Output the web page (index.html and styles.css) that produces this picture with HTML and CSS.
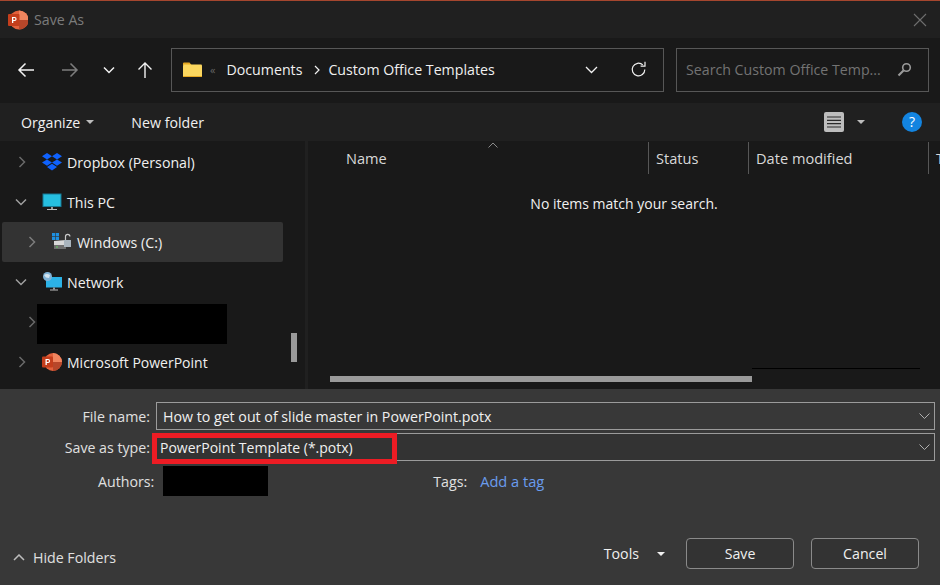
FILE: index.html
```html
<!DOCTYPE html>
<html lang="en">
<head>
  <meta charset="UTF-8">
  <title>Save As</title>
  <link rel="stylesheet" href="styles.css">
</head>
<body>
  <div class="dialog">
    <div class="titlebar">
      <svg class="app-icon" width="20" height="20" viewBox="0 0 20 20">
        <circle cx="11" cy="10" r="9.5" fill="#e2613c"/>
        <path d="M11 10h9.500a9.500 9.500 0 0 1-9.500 9.500z" fill="#b7472a"/>
        <path d="M11 .5a9.500 9.500 0 0 1 9.500 9.500H11z" fill="#f0855f"/>
        <rect x="0" y="4" width="11.500" height="12" rx="1" fill="#c43e1c"/>
        <path d="M4 13V7h2.600a2 2 0 0 1 0 4H5.300v2z M5.300 8.100V10h1.200a.95.95 0 0 0 0-1.900z" fill="#fff" fill-rule="evenodd"/>
      </svg>
      <span class="title">Save As</span>
      <svg class="close" width="14" height="14" viewBox="0 0 14 14"><path d="M1 1l12 12M13 1L1 13" stroke="#6e6e6e" stroke-width="1.100" fill="none"/></svg>
    </div>

    <div class="navbar">
      <div class="nav-buttons">
        <svg class="nav-back" width="18" height="16" viewBox="0 0 18 16"><path d="M17 8H2M8.500 1.500L2 8l6.500 6.500" stroke="#f2f2f2" stroke-width="1.500" fill="none"/></svg>
        <svg class="nav-forward" width="18" height="16" viewBox="0 0 18 16"><path d="M1 8h15M9.500 1.500L16 8l-6.500 6.500" stroke="#7d7d7d" stroke-width="1.500" fill="none"/></svg>
        <svg class="nav-recent" width="12" height="8" viewBox="0 0 12 8"><path d="M1 1.500l5 5 5-5" stroke="#f2f2f2" stroke-width="1.500" fill="none"/></svg>
        <svg class="nav-up" width="16" height="18" viewBox="0 0 16 18"><path d="M8 17V2M1.500 8.500L8 2l6.500 6.500" stroke="#f2f2f2" stroke-width="1.400" fill="none"/></svg>
      </div>
      <div class="address">
        <svg class="folder" width="19" height="15" viewBox="0 0 19 15">
          <path d="M0 1.500A1 1 0 0 1 1 .5h5.500l2 2.500H0z" fill="#e5a823"/>
          <rect x="0" y="2.500" width="19" height="12.500" rx="1" fill="#fbd75f"/>
          <rect x="0" y="14" width="19" height="1" fill="#e5a823"/>
        </svg>
        <span class="crumb-more">«</span>
        <span class="crumb">Documents</span>
        <svg class="crumb-sep" width="6" height="10" viewBox="0 0 6 10"><path d="M1 1l4 4-4 4" stroke="#f2f2f2" stroke-width="1.200" fill="none"/></svg>
        <span class="crumb">Custom Office Templates</span>
        <svg class="address-drop" width="13" height="8" viewBox="0 0 13 8"><path d="M1 1l5.500 5.500L12 1" stroke="#f2f2f2" stroke-width="1.300" fill="none"/></svg>
        <svg class="refresh" width="17" height="17" viewBox="0 0 17 17"><path d="M14.800 8.500a6.300 6.300 0 1 1-2-4.600" stroke="#f2f2f2" stroke-width="1.200" fill="none"/><path d="M15 .8v4.400h-4.400" stroke="#f2f2f2" stroke-width="1.200" fill="none"/></svg>
      </div>
      <div class="search">
        <span class="search-text">Search Custom Office Temp...</span>
        <svg width="15" height="15" viewBox="0 0 15 15"><circle cx="9.500" cy="5.500" r="3.800" stroke="#9a9a9a" stroke-width="1.600" fill="none"/><path d="M6.500 8.500L1.500 13.500" stroke="#9a9a9a" stroke-width="2.200"/></svg>
      </div>
    </div>

    <div class="toolbar">
      <span class="tool">Organize</span>
      <span class="caret organize-caret"></span>
      <span class="tool new-folder">New folder</span>
      <svg class="view-icon" width="20" height="20" viewBox="0 0 20 20"><rect width="20" height="20" rx="2" fill="#bdbdbd"/><path d="M3 5h14M3 8.300h14M3 11.600h14M3 15h14" stroke="#2a2a2a" stroke-width="1.200"/></svg>
      <span class="caret view-caret"></span>
      <svg class="help" width="20" height="20" viewBox="0 0 20 20"><circle cx="10" cy="10" r="10" fill="#1384e0"/><text x="10" y="15" text-anchor="middle" class="help-mark">?</text></svg>
    </div>

    <div class="browser">
      <div class="sidebar">
        <div class="tree-row">
          <svg class="chev" width="8" height="12" viewBox="0 0 8 12"><path d="M1.500 1l5 5-5 5" stroke="#6a6a6a" stroke-width="1.500" fill="none"/></svg>
          <svg class="tree-icon" width="20" height="18" viewBox="0 0 20 18"><path d="M5 0L0 3.200l5 3.200 5-3.200zM15 0l-5 3.200 5 3.200 5-3.200zM0 9.600l5 3.200 5-3.200-5-3.200zM20 9.600l-5-3.200-5 3.200 5 3.200zM5 14l5 3.400 5-3.400-5-3.200z" fill="#0f62fe"/></svg>
          <span>Dropbox (Personal)</span>
        </div>
        <div class="tree-row">
          <svg class="chev-open" width="12" height="8" viewBox="0 0 12 8"><path d="M1 1.500l5 5 5-5" stroke="#a0a0a0" stroke-width="1.500" fill="none"/></svg>
          <svg class="tree-icon" width="20" height="18" viewBox="0 0 20 18"><rect x="1" y="1" width="18" height="12.500" fill="#26bfe0" stroke="#167a96"/><rect x="9" y="14" width="2" height="2" fill="#9a9a9a"/><rect x="5" y="16" width="10" height="1" fill="#bcbcbc"/></svg>
          <span>This PC</span>
        </div>
        <div class="tree-row tree-row-indent tree-row-selected">
          <svg class="chev" width="8" height="12" viewBox="0 0 8 12"><path d="M1.500 1l5 5-5 5" stroke="#7d7d7d" stroke-width="1.500" fill="none"/></svg>
          <svg class="tree-icon" width="20" height="18" viewBox="0 0 20 18"><rect x="0" y="0" width="3.200" height="3.200" fill="#1e8fe0"/><rect x="3.800" y="0" width="3.200" height="3.200" fill="#1e8fe0"/><rect x="0" y="3.800" width="3.200" height="3.200" fill="#1e8fe0"/><rect x="3.800" y="3.800" width="3.200" height="3.200" fill="#1e8fe0"/><path d="M2 8l12-1v9H2z" fill="#d8d8d8"/><rect x="2" y="12" width="12" height="4" fill="#6f6f6f"/><rect x="4" y="13.500" width="2" height="1" fill="#5fd35f"/><rect x="12" y="7" width="7" height="7" fill="#a9b4bd"/><path d="M13.500 7V3.500a2.200 2.200 0 0 1 4.400 0" stroke="#c9c9c9" stroke-width="1.200" fill="none"/></svg>
          <span>Windows (C:)</span>
        </div>
        <div class="tree-row">
          <svg class="chev-open" width="12" height="8" viewBox="0 0 12 8"><path d="M1 1.500l5 5 5-5" stroke="#a0a0a0" stroke-width="1.500" fill="none"/></svg>
          <svg class="tree-icon" width="20" height="20" viewBox="0 0 20 20"><rect x="4" y="5" width="16" height="10.500" fill="#2cb2e6"/><rect x="11" y="15.500" width="2" height="2" fill="#9a9a9a"/><rect x="8" y="17.500" width="8" height="1" fill="#bcbcbc"/><circle cx="5.500" cy="4.500" r="4.500" fill="#7fb2d6"/><path d="M2 3a5 5 0 0 1 6 0l-1 3-3-.5z" fill="#d3e4ef"/></svg>
          <span>Network</span>
        </div>
        <div class="tree-row tree-row-indent">
          <svg class="chev" width="8" height="12" viewBox="0 0 8 12"><path d="M1.500 1l5 5-5 5" stroke="#6a6a6a" stroke-width="1.500" fill="none"/></svg>
          <div class="redacted tree-redacted"></div>
        </div>
        <div class="tree-row">
          <svg class="chev" width="8" height="12" viewBox="0 0 8 12"><path d="M1.500 1l5 5-5 5" stroke="#6a6a6a" stroke-width="1.500" fill="none"/></svg>
          <svg class="tree-icon" width="20" height="18" viewBox="0 0 20 18">
            <circle cx="11" cy="9" r="9" fill="#e2613c"/>
            <path d="M11 9h9a9 9 0 0 1-9 9z" fill="#b7472a"/>
            <path d="M11 0a9 9 0 0 1 9 9h-9z" fill="#f0855f"/>
            <rect x="0" y="3.500" width="11" height="11" rx="1" fill="#c43e1c"/>
            <path d="M3.500 12V6h2.600a2 2 0 0 1 0 4H4.800v2z M4.800 7.100V9H6a.95.95 0 0 0 0-1.900z" fill="#fff" fill-rule="evenodd"/>
          </svg>
          <span class="tree-label-tight">Microsoft PowerPoint</span>
        </div>
        <div class="side-scroll"></div>
      </div>
      <div class="files">
        <div class="columns">
          <div class="col col-name">Name
            <svg class="sort-mark" width="10" height="6" viewBox="0 0 10 6"><path d="M.5 5.500L5 1l4.500 4.500" stroke="#8a8a8a" fill="none"/></svg>
          </div>
          <div class="col col-status">Status</div>
          <div class="col col-date">Date modified</div>
          <div class="col col-type">T</div>
        </div>
        <div class="empty">No items match your search.</div>
        <div class="list-edge"></div>
        <div class="h-scroll"><div class="h-thumb"></div></div>
      </div>
    </div>

    <div class="form">
      <div class="field-row">
        <label class="field-label">File name:</label>
        <div class="combo">
          <span>How to get out of slide master in PowerPoint.potx</span>
          <svg width="11" height="6" viewBox="0 0 11 6"><path d="M.5 .5l5 5 5-5" stroke="#b0b0b0" fill="none"/></svg>
        </div>
      </div>
      <div class="field-row type-row">
        <label class="field-label">Save as type:</label>
        <div class="combo combo-type">
          <span>PowerPoint Template (*.potx)</span>
          <svg width="11" height="6" viewBox="0 0 11 6"><path d="M.5 .5l5 5 5-5" stroke="#b0b0b0" fill="none"/></svg>
          <div class="highlight"></div>
        </div>
      </div>
      <div class="meta-row">
        <label class="field-label meta-label">Authors:</label>
        <div class="redacted authors-redacted"></div>
        <span class="field-label tags-label">Tags:</span>
        <span class="add-tag">Add a tag</span>
      </div>
      <div class="footer-row">
        <svg class="hide-chev" width="12" height="7" viewBox="0 0 12 7"><path d="M1 6l5-5 5 5" stroke="#bdbdbd" stroke-width="1.500" fill="none"/></svg>
        <span class="hide-folders">Hide Folders</span>
        <span class="tools">Tools</span>
        <span class="caret tools-caret"></span>
        <button class="btn">Save</button>
        <button class="btn btn-cancel">Cancel</button>
      </div>
    </div>
  </div>
</body>
</html>
```

FILE: styles.css
```css
* {
  box-sizing: border-box;
}
html, body {
  margin: 0;
  height: 100%;
}
body {
  font-family: "Open Sans", "Noto Sans", sans-serif;
  font-size: 14.2px;
  color: #f0f0f0;
  background: #202020;
  overflow: hidden;
}
svg {
  display: block;
  flex: none;
}
.dialog {
  width: 940px;
  height: 585px;
  display: flex;
  flex-direction: column;
}
.titlebar {
  height: 38px;
  background: #202020;
  border-top: 1px solid #a5462e;
  display: flex;
  align-items: center;
  padding: 0 13px 0 8px;
}
.title {
  margin-left: 6px;
  color: #7b7b7b;
}
.close {
  margin-left: auto;
}
.navbar {
  height: 65px;
  background: #191919;
  display: flex;
  align-items: center;
  padding: 0 11px 2px 17px;
}
.nav-buttons {
  display: flex;
  align-items: center;
  width: 154px;
}
.nav-forward {
  margin-left: 26px;
}
.nav-recent {
  margin-left: 24px;
}
.nav-up {
  margin-left: 22px;
}
.address, .search {
  height: 44px;
  border: 1px solid #575757;
  display: flex;
  align-items: center;
}
.address {
  width: 493px;
  padding: 0 16px 0 11px;
}
.crumb-more {
  margin: 0 11px 0 8px;
  color: #666;
  font-size: 11px;
}
.crumb-sep {
  margin: 0 8px 0 12px;
}
.address-drop {
  margin-left: auto;
}
.refresh {
  margin-left: 32px;
}
.search {
  width: 253px;
  margin-left: 12px;
  padding: 0 16px 0 9px;
  justify-content: space-between;
  color: #737373;
}
.toolbar {
  height: 38px;
  background: #202020;
  display: flex;
  align-items: center;
  padding: 0 18px 0 21px;
}
.organize-caret {
  margin-left: 6px;
}
.new-folder {
  margin-left: 37px;
}
.caret {
  width: 0;
  height: 0;
  border-left: 4.5px solid transparent;
  border-right: 4.5px solid transparent;
  border-top: 4.5px solid #bdbdbd;
}
.view-icon {
  margin-left: auto;
}
.view-caret {
  margin: 0 37px 0 13px;
}
.help-mark {
  font-size: 14px;
  fill: #fff;
}
.browser {
  height: 248px;
  background: #191919;
  display: flex;
}
.sidebar {
  flex: none;
  width: 308px;
  padding: 1px 22px 0 2px;
  border-right: 3px solid #202020;
  position: relative;
}
.tree-row {
  height: 40px;
  display: flex;
  align-items: center;
  padding-left: 16px;
  border-radius: 2px;
}
.tree-row .chev {
  margin-right: 16px;
}
.tree-row .chev-open {
  margin: 0 15px 0 -3px;
}
.tree-icon {
  margin-right: 5px;
}
.tree-row-indent {
  padding-left: 26px;
}
.tree-row-selected {
  background: #333;
}
.tree-label-tight {
  font-size: 14px;
}
.side-scroll {
  position: absolute;
  left: 291px;
  top: 192px;
  width: 6px;
  height: 29px;
  background: #9a9a9a;
}
.redacted {
  background: #000;
}
.tree-redacted {
  width: 190px;
  height: 40px;
  margin: 4px 0 0 -15px;
}
.files {
  flex: 1;
  min-width: 0;
  position: relative;
}
.columns {
  height: 32px;
  margin-top: 1px;
  display: flex;
  color: #d8d8d8;
  font-size: 14.6px;
}
.col {
  flex: none;
  display: flex;
  align-items: center;
  padding-left: 7px;
  border-left: 1px solid #575757;
}
.col-name {
  width: 340px;
  padding-left: 38px;
  border-left: 0;
  position: relative;
}
.sort-mark {
  position: absolute;
  left: 180px;
  top: 0;
}
.col-status {
  width: 100px;
}
.col-date {
  width: 180px;
}
.col-type {
  flex: 1;
  overflow: hidden;
}
.empty {
  text-align: center;
  margin-top: 20px;
  font-size: 14px;
}
.list-edge {
  position: absolute;
  left: 444px;
  top: 227px;
  width: 168px;
  height: 1px;
  background: #000;
}
.h-scroll {
  position: absolute;
  left: 22px;
  bottom: 7px;
  height: 6px;
}
.h-thumb {
  width: 422px;
  height: 6px;
  background: #9a9a9a;
}
.form {
  flex: 1;
  background: #383838;
  padding-top: 13px;
  display: flex;
  flex-direction: column;
}
.field-row {
  display: flex;
  align-items: center;
  height: 28px;
  margin-bottom: 3px;
  padding-right: 5px;
}
.field-label {
  color: #e0e0e0;
}
.field-row .field-label {
  width: 150px;
  text-align: right;
}
.combo {
  margin-left: 6px;
  flex: 1;
  height: 28px;
  border: 1px solid #9b9b9b;
  display: flex;
  align-items: center;
  justify-content: space-between;
  padding: 0 4px 0 6px;
  position: relative;
}
.combo-type {
  background: #333;
  padding-left: 3px;
  font-size: 14px;
}
.highlight {
  position: absolute;
  left: -5px;
  top: -1px;
  width: 245px;
  height: 31px;
  border: 5px solid #ed1c24;
}
.meta-row {
  display: flex;
  align-items: center;
  height: 30px;
  margin-top: 2px;
}
.meta-label {
  margin-left: 98px;
}
.authors-redacted {
  width: 105px;
  height: 30px;
  margin-left: 9px;
}
.tags-label {
  margin-left: 165px;
}
.add-tag {
  margin-left: 13px;
  font-size: 14.6px;
  color: #6a9cee;
}
.footer-row {
  margin-top: 42px;
  display: flex;
  align-items: center;
  height: 31px;
  padding: 0 21px 0 13px;
}
.hide-chev {
  margin-top: 8px;
}
.hide-folders {
  margin: 8px 0 0 8px;
  color: #e0e0e0;
}
.tools {
  margin-left: auto;
}
.tools-caret {
  margin: 0 21px 0 18px;
  border-top-color: #f0f0f0;
}
.btn {
  width: 108px;
  height: 31px;
  background: #333;
  color: #f0f0f0;
  border: 1px solid #8a8a8a;
  border-radius: 4px;
  font: inherit;
}
.btn-cancel {
  margin-left: 17px;
}
```
